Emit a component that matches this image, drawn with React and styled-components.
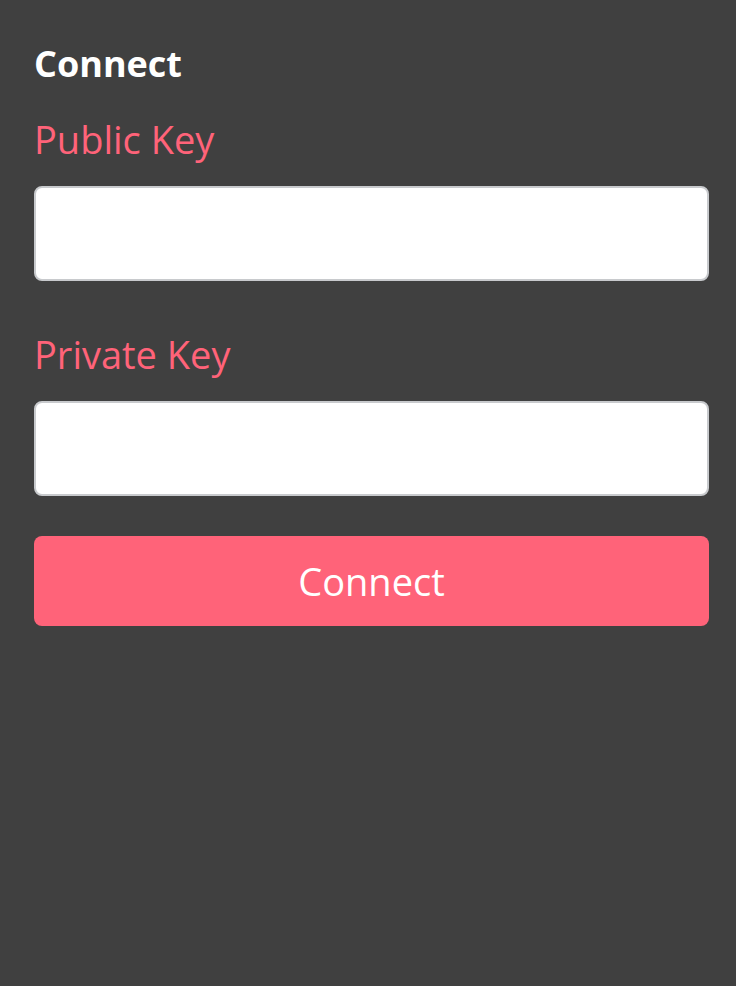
import React from "react";
import styled, { createGlobalStyle } from "styled-components";

const GlobalStyle = createGlobalStyle`
  html, body {
    margin: 0;
    padding: 0;
    background: #404040;
  }
  body {
    font-family: "Open Sans", "Noto Sans", sans-serif;
  }
`;

const Page = styled.div`
  min-height: 986px;
  box-sizing: border-box;
  padding: 40px 27px 0 34px;
  display: flex;
  flex-direction: column;
`;

const Title = styled.h1`
  margin: 0;
  color: #ffffff;
  font-size: 36px;
  font-weight: 700;
  line-height: 48px;
`;

const Form = styled.form`
  display: flex;
  flex-direction: column;
  margin-top: 27px;
`;

const Label = styled.label`
  color: #ff6379;
  font-size: 38px;
  font-weight: 400;
  line-height: 48px;
  margin-bottom: 23px;
`;

const Input = styled.input`
  box-sizing: border-box;
  height: 95px;
  width: 100%;
  border: 2px solid #c8cacd;
  border-radius: 8px;
  background: #ffffff;
  font-size: 32px;
  padding: 0 16px;
  margin-bottom: ${(p) => p.$gap || 0}px;
  outline: none;
`;

const Button = styled.button`
  height: 90px;
  width: 100%;
  border: none;
  border-radius: 8px;
  background: #ff6379;
  color: #ffffff;
  font-family: inherit;
  font-size: 38px;
  cursor: pointer;
`;

export default function App() {
  return (
    <>
      <GlobalStyle />
      <Page>
        <Title>Connect</Title>
        <Form onSubmit={(e) => e.preventDefault()}>
          <Label htmlFor="pub">Public Key</Label>
          <Input id="pub" $gap={49} />
          <Label htmlFor="priv">Private Key</Label>
          <Input id="priv" $gap={40} />
          <Button type="submit">Connect</Button>
        </Form>
      </Page>
    </>
  );
}
